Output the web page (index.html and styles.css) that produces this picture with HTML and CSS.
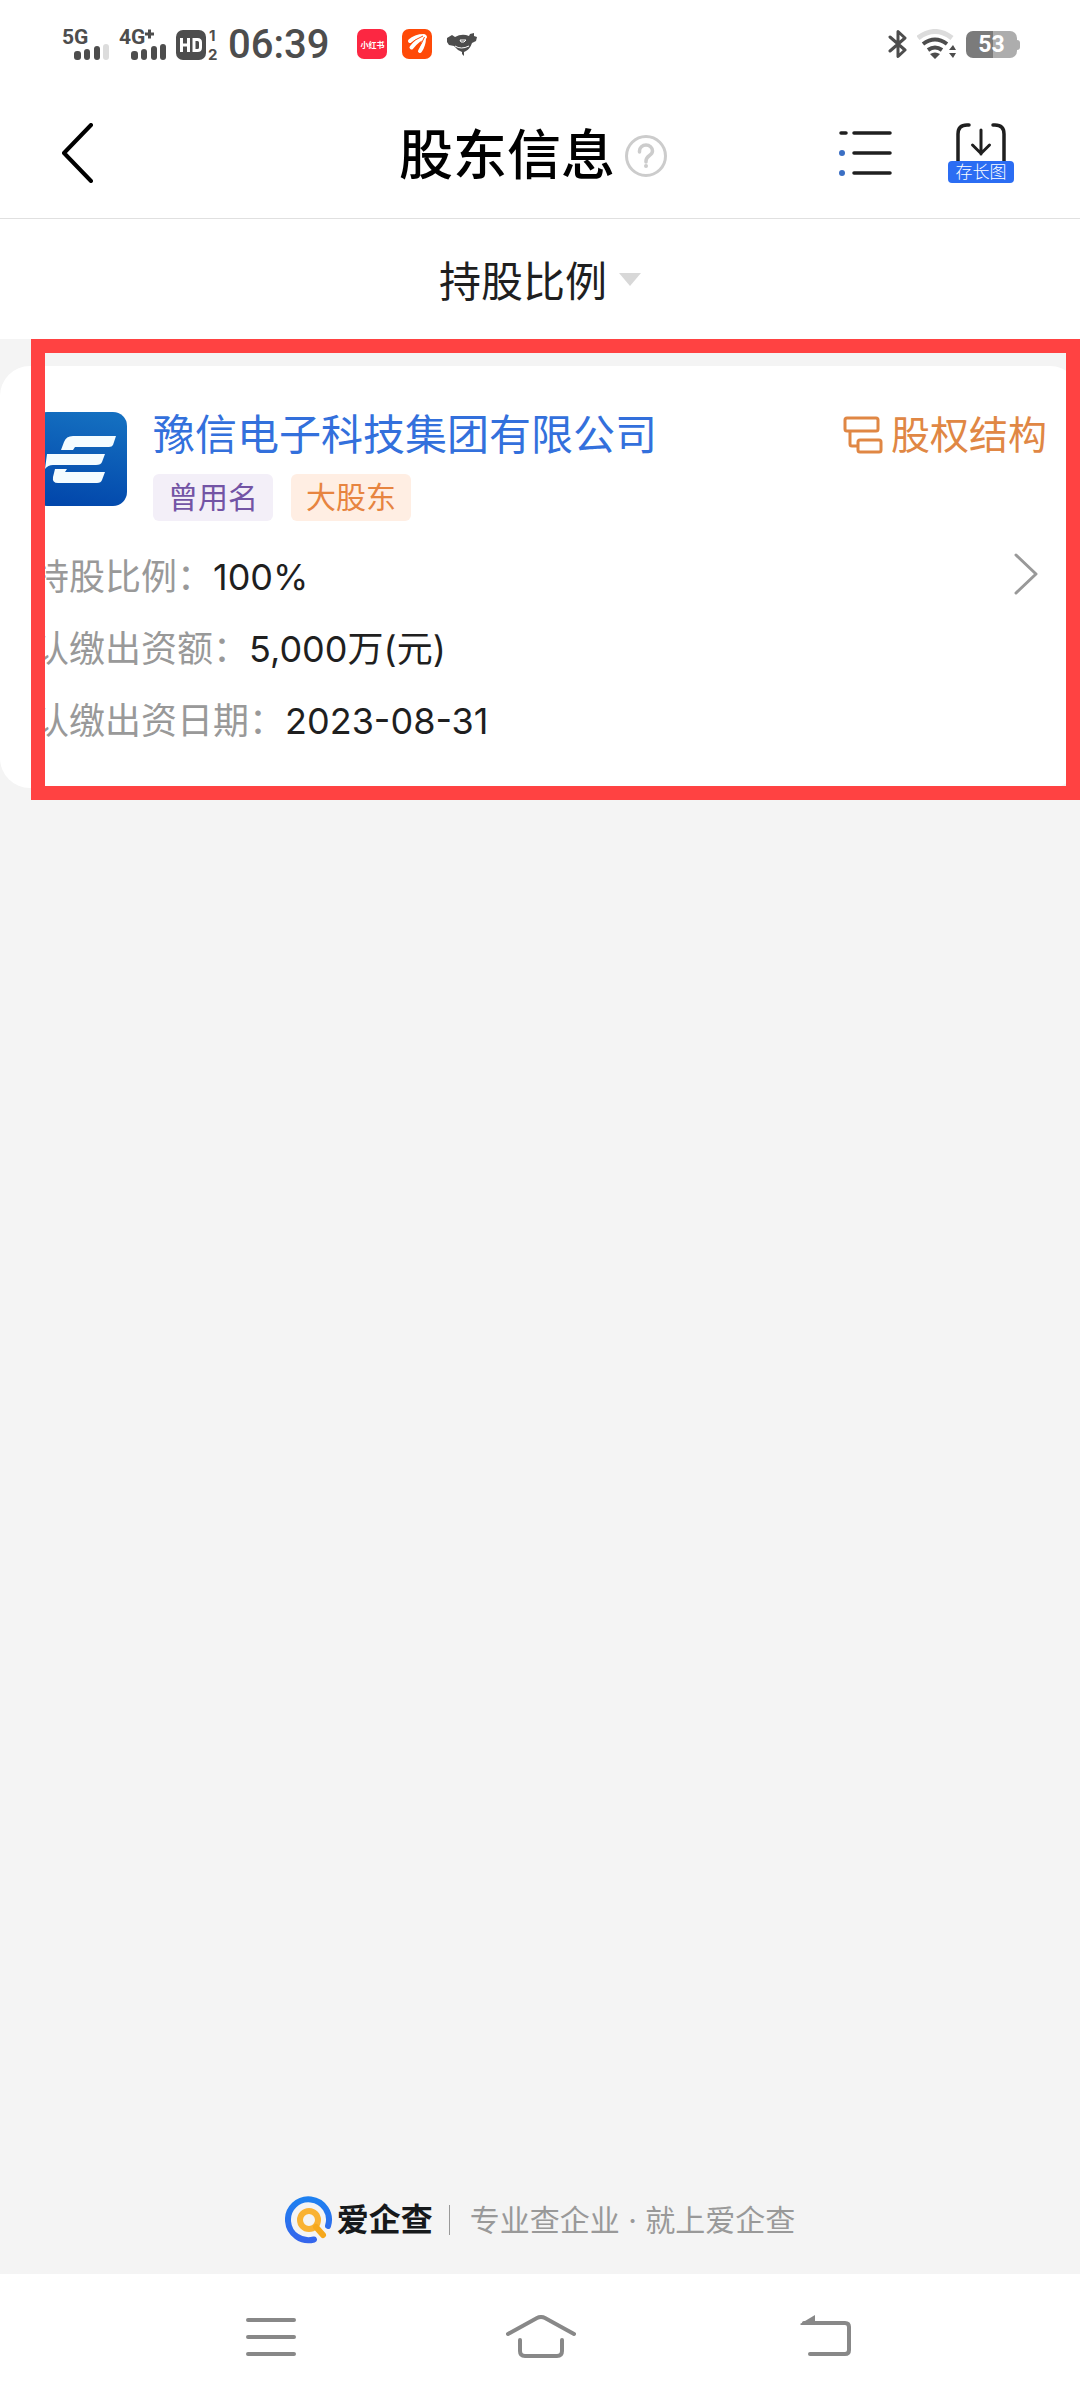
FILE: index.html
```html
<!DOCTYPE html>
<html lang="zh-CN">
<head>
<meta charset="utf-8">
<meta name="viewport" content="width=device-width">
<title>股东信息</title>
<link rel="stylesheet" href="styles.css">
</head>
<body>
<div class="status">
  <div class="status-left">
    <svg class="signal" width="50" height="42" viewBox="0 -4 50 42">
      <text x="0" y="17" class="net">5G</text>
      <g fill="#4d4d4d"><rect x="12" y="24" width="7" height="9" rx="3"/><rect x="22" y="22" width="6" height="11" rx="3"/><rect x="32" y="19" width="6" height="14" rx="3"/></g>
      <rect x="41" y="17" width="6" height="16" rx="3" fill="#dcdcdc"/>
    </svg>
    <svg class="signal" width="50" height="42" viewBox="0 -4 50 42">
      <text x="0" y="17" class="net">4G</text>
      <path d="M26 7h9M30.500 2.500v9" stroke="#4d4d4d" stroke-width="3"/>
      <g fill="#4d4d4d"><rect x="12" y="24" width="7" height="9" rx="3"/><rect x="22" y="22" width="6" height="11" rx="3"/><rect x="32" y="19" width="6" height="14" rx="3"/><rect x="41" y="17" width="6" height="16" rx="3"/></g>
    </svg>
    <svg width="46" height="42" viewBox="0 -4 46 42">
      <rect y="3" width="30" height="30" rx="7" fill="#4d4d4d"/>
      <path d="M5.500 11v14M12.500 11v14M5.500 18h7M18 12.500h3.500q3 0 3 3v5q0 3-3 3H18z" fill="none" stroke="#fff" stroke-width="3"/>
      <text x="33" y="14" class="sim">1</text>
      <text x="32" y="33" class="sim">2</text>
    </svg>
    <time class="clock">06:39</time>
    <div class="notices">
      <span class="notice notice-red">小红书</span>
      <span class="notice notice-orange">
        <svg width="30" height="30" viewBox="0 0 30 30"><g fill="none" stroke="#fff" stroke-linecap="round"><path d="M8 12Q13 7 22 7" stroke-width="4"/><path d="M9.500 18.500Q16 10 23 8" stroke-width="4"/><path d="M18 22Q22 16 22 9" stroke-width="4"/></g><path d="M7.500 16Q13 10 21 7M14 22Q20 15 22.500 8" fill="none" stroke="#ff4a08" stroke-width="1"/></svg>
      </span>
      <svg width="30" height="30" viewBox="0 0 30 30"><path d="M0 9l5-3 3 2q7-4 14-1l1-2 4-1v3l3 1-1 4-4 2q-2 6-6 8l-2 1v4l-2-2v-2q-5-2-8-6l-5-1-2-3z" fill="#4d4d4d"/><path d="M13 11h6l-2 2h-3zM8 17q6 4 14 0" fill="none" stroke="#fff" stroke-width="1"/></svg>
    </div>
  </div>
  <div class="status-right">
    <svg width="20" height="30" viewBox="0 0 20 30"><path d="M2 8l15 13-7 6.500V2.500L17 9 2 22" fill="none" stroke="#4d4d4d" stroke-width="3" stroke-linejoin="round" stroke-linecap="round"/></svg>
    <svg width="40" height="30" viewBox="0 0 40 30">
      <path d="M1 9Q18-4 35 9" fill="none" stroke="#dcdcdc" stroke-width="5"/>
      <path d="M6 15q12-9 24 0M11 21q7-5 14 0" fill="none" stroke="#4d4d4d" stroke-width="4"/>
      <path d="M13 25q5-3 10 0l-5 5zM32 21l4-5 3 5zM32 24h7l-3 5z" fill="#4d4d4d"/>
    </svg>
    <span class="battery"><span class="battery-level">53</span></span>
  </div>
</div>

<header class="header">
  <button class="back" aria-label="返回">
    <svg width="34" height="60" viewBox="0 0 34 60"><path d="M31 2L4 30l27 28" fill="none" stroke="#000" stroke-width="4" stroke-linecap="round" stroke-linejoin="round"/></svg>
  </button>
  <div class="title-group">
    <h1 class="title">股东信息</h1>
    <button class="help" aria-label="说明">
      <svg width="42" height="42" viewBox="0 0 42 42" fill="none" stroke="#ccc"><circle cx="21" cy="21" r="19.500" stroke-width="3"/><path d="M14.500 17v-1a6.500 6 0 0 1 13 0c0 5-6.500 4-6.500 10v1" stroke-width="3.500" stroke-linecap="round"/><circle cx="21" cy="31" r="2" fill="#ccc" stroke="none"/></svg>
    </button>
  </div>
  <div class="actions">
    <button class="action" aria-label="列表">
      <svg width="54" height="46" viewBox="0 0 54 46"><path d="M2 3h5M15 3h36M15 23h36M15 43h36" stroke="#1f1f1f" stroke-width="3.500" stroke-linecap="round"/><g fill="#3b6fc4"><circle cx="3" cy="23" r="3"/><circle cx="3" cy="43" r="3"/></g></svg>
    </button>
    <button class="action save">
      <svg width="50" height="38" viewBox="0 0 50 38" fill="none" stroke="#1f1f1f"><path d="M2 38V11q0-9 9-9h2M48 38V11q0-9-9-9h-2" stroke-width="3.500" stroke-linecap="round"/><path d="M25 7v24M16.500 22l8.500 8.500 8.500-8.500" stroke-width="3" stroke-linecap="round"/></svg>
      <span class="save-label">存长图</span>
    </button>
  </div>
</header>

<div class="sort">
  <button class="sort-button">持股比例<svg width="22" height="16" viewBox="0 0 22 16"><path d="M0 3h22L11 16z" fill="#d8d8d8"/></svg></button>
</div>

<main class="main">
  <section class="holders">
    <article class="card">
      <div class="card-head">
        <svg class="logo" width="94" height="94" viewBox="0 0 94 94">
          <defs><linearGradient id="tile" x1="0.600" y1="0" x2="0.400" y2="1"><stop offset="0" stop-color="#146fc0"/><stop offset="1" stop-color="#0247ab"/></linearGradient></defs>
          <rect width="94" height="94" rx="14" fill="url(#tile)"/>
          <path d="M28 38l3-8q2-6 9-6h43l-3 9q-1 2-4 2H42l-2 3zM14 42h58l-3 8q-1 3-6 3H20q-5 0-8 4zM22 57h12l-2 3h40l-3 8q-1 3-5 3H25q-6 0-5-6z" fill="#f4fcff"/>
        </svg>
        <div class="identity">
          <a class="company" href="#">豫信电子科技集团有限公司</a>
          <div class="tags"><span class="tag tag-former">曾用名</span><span class="tag tag-major">大股东</span></div>
        </div>
        <a class="structure" href="#">
          <svg width="40" height="38" viewBox="0 0 40 38" fill="none" stroke="currentColor" stroke-width="3"><rect x="2" y="2" width="33" height="13" rx="2"/><rect x="15" y="24" width="23" height="12" rx="2"/><path d="M7 15v13q0 2 2 2h6"/></svg>股权结构</a>
      </div>
      <div class="card-body">
        <dl class="facts">
          <div class="fact"><dt>持股比例：</dt><dd>100%</dd></div>
          <div class="fact"><dt>认缴出资额：</dt><dd>5,000万(元)</dd></div>
          <div class="fact"><dt>认缴出资日期：</dt><dd>2023-08-31</dd></div>
        </dl>
        <button class="more" aria-label="查看详情"><svg width="24" height="42" viewBox="0 0 24 42"><path d="M2 2l20 19L2 40" fill="none" stroke="#999" stroke-width="3" stroke-linecap="round" stroke-linejoin="round"/></svg></button>
      </div>
    </article>
    <div class="highlight"></div>
  </section>
  <footer class="footer">
    <svg width="48" height="48" viewBox="0 0 48 48" fill="none" stroke-linecap="round">
      <defs><linearGradient id="ring" x1="0" y1="0" x2="0" y2="1"><stop offset="0" stop-color="#1e80f0"/><stop offset="1" stop-color="#3566ec"/></linearGradient></defs>
      <path d="M43 30A20.500 20.500 0 1 0 29 43.500" stroke="url(#ring)" stroke-width="6"/>
      <circle cx="24" cy="24" r="9" stroke="#f9b233" stroke-width="6"/><path d="M31 31l7 8" stroke="#f6a81c" stroke-width="6"/>
    </svg>
    <strong class="brand">爱企查</strong>
    <span class="tagline">专业查企业 · 就上爱企查</span>
  </footer>
</main>

<nav class="nav">
  <button class="nav-button" aria-label="最近任务"><svg width="50" height="44" viewBox="0 0 50 44"><path d="M2 5h46M2 22h46M2 39h46" stroke="#888" stroke-width="4" stroke-linecap="round"/></svg></button>
  <button class="nav-button" aria-label="主屏幕"><svg width="70" height="44" viewBox="0 0 70 44" fill="none" stroke="#888" stroke-width="4" stroke-linecap="round"><path d="M2 19L31 3q4-2 8 0l29 16M14 25v11q0 5 5 5h32q5 0 5-5V25"/></svg></button>
  <button class="nav-button" aria-label="后退"><svg width="52" height="44" viewBox="0 0 52 44"><path d="M10 39h35q4 0 4-4V12q0-4-4-4H4" fill="none" stroke="#888" stroke-width="4" stroke-linecap="round"/><path d="M0 9L15 0v10H1z" fill="#888"/></svg></button>
</nav>
</body>
</html>
```
FILE: styles.css
```css
* { box-sizing: border-box; }

body {
  display: flex;
  flex-direction: column;
  min-height: 100vh;
  margin: 0;
  background: #fff;
  color: #1f1f1f;
  font-family: Inter, "Noto Sans CJK SC", sans-serif;
}

svg { display: block; flex: none; }
a { text-decoration: none; }

button {
  margin: 0;
  padding: 0;
  border: 0;
  background: none;
  color: inherit;
  font: inherit;
}

/* System status bar */
.status {
  display: flex;
  justify-content: space-between;
  align-items: center;
  height: 88px;
  padding: 0 60px 0 62px;
  color: #4d4d4d;
}

.status-left,
.status-right { display: flex; align-items: center; }
.signal { margin-right: 7px; }
.status-right { gap: 9px; }

.net { font: 700 21px Roboto, sans-serif; fill: #4d4d4d; }
.sim { font: 700 15px Inter, sans-serif; fill: #4d4d4d; }

.clock {
  margin-left: 6px;
  padding-top: 2px;
  font: 500 40px/44px Roboto, sans-serif;
}

.notices { display: flex; gap: 15px; margin-left: 28px; }

.notice {
  display: flex;
  align-items: center;
  justify-content: center;
  width: 30px;
  height: 30px;
  border-radius: 7px;
  color: #fff;
}

.notice-red { background: #fc2742; font-size: 8px; font-weight: 700; }
.notice-orange { background: #ff4a08; }

.battery {
  position: relative;
  width: 51px;
  height: 27px;
  margin-right: 3px;
  border-radius: 7px;
  background: linear-gradient(90deg, #7b7b7b 53%, #adadad 53%);
  text-align: center;
}

.battery::after {
  content: "";
  position: absolute;
  top: 9px;
  right: -3px;
  width: 3px;
  height: 10px;
  border-radius: 0 3px 3px 0;
  background: #adadad;
}

.battery-level { color: #fff; font: 700 23px/27px Roboto, sans-serif; }

/* Page header */
.header {
  display: grid;
  grid-template-columns: 1fr auto 1fr;
  align-items: center;
  height: 131px;
  padding: 0 66px 0 52px;
  border-bottom: 1px solid #e0e0e0;
}

.back { justify-self: start; padding-left: 8px; }
.title-group { display: flex; align-items: center; gap: 10px; padding-top: 6px; }

.title {
  margin: 0;
  color: #000;
  font-size: 54px;
  font-weight: 500;
  line-height: 64px;
}

.actions {
  display: flex;
  justify-content: flex-end;
  align-items: center;
  gap: 55px;
}

.save { display: flex; flex-direction: column; align-items: center; }

.save-label {
  width: 66px;
  border-radius: 4px;
  background: #2b6df3;
  color: #fff;
  font-size: 17px;
  font-weight: 300;
  line-height: 22px;
}

/* Sort selector */
.sort {
  display: flex;
  justify-content: center;
  height: 120px;
  padding-bottom: 2px;
}

.sort-button {
  display: flex;
  align-items: center;
  gap: 12px;
  font-size: 42px;
}

/* Shareholder list */
.main {
  display: flex;
  flex: 1;
  flex-direction: column;
  justify-content: space-between;
  background: #f4f4f4;
}

.holders { position: relative; padding: 27px 0 12px; }

.card {
  padding: 46px 33px 31px;
  border-radius: 30px;
  background: #fff;
}

.card-head { display: flex; align-items: flex-start; }

.identity {
  display: flex;
  flex: 1;
  flex-direction: column;
  gap: 16px;
  margin-left: 26px;
}

.company { color: #3370dc; font-size: 42px; line-height: 46px; }
.tags { display: flex; gap: 18px; }

.tag {
  padding: 0 15px;
  border-radius: 6px;
  font-size: 30px;
  line-height: 47px;
}

.tag-former { background: #f3eff8; color: #7354a5; }
.tag-major { background: #ffeee3; color: #e78440; }

.structure {
  display: flex;
  align-items: center;
  gap: 8px;
  color: #e08744;
  font-size: 39px;
  line-height: 46px;
}

.card-body {
  display: flex;
  justify-content: space-between;
  align-items: flex-start;
  margin-top: 20px;
}

.facts { margin: 0; font-size: 36px; line-height: 72px; }
.fact { display: flex; }
.fact dt { color: #999; }
.fact dd { margin: 0; }
.more { margin-right: 9px; padding: 12px 0; }

/* Annotation frame drawn over the card */
.highlight {
  position: absolute;
  inset: 0 0 0 31px;
  border: 14px solid #ff4242;
  pointer-events: none;
}

.footer {
  display: flex;
  justify-content: center;
  align-items: center;
  padding-bottom: 30px;
}

.brand {
  margin-left: 4px;
  color: #16191b;
  font-size: 32px;
  line-height: 48px;
}

.tagline {
  margin-left: 16px;
  padding-left: 20px;
  border-left: 1px solid #999;
  color: #999;
  font-size: 30px;
  line-height: 30px;
}

/* System navigation bar */
.nav {
  display: grid;
  grid-template-columns: 27fr 27fr 30fr;
  align-items: center;
  height: 126px;
  padding: 0 104px 0 136px;
}

.nav-button {
  display: flex;
  justify-content: center;
}
```
